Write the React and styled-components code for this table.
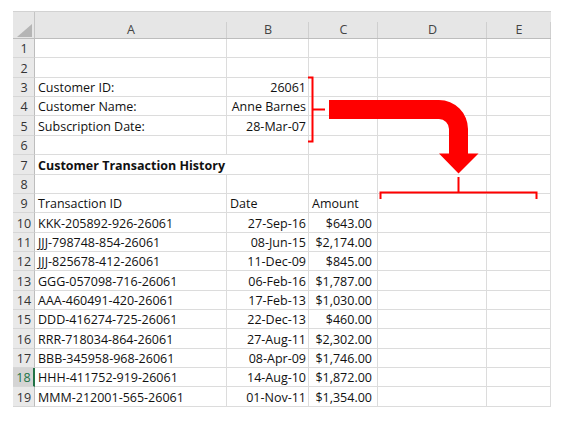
import React from "react";
import styled, { createGlobalStyle, css } from "styled-components";

const GlobalStyle = createGlobalStyle`
  body {
    margin: 0;
    background: #fff;
    font-family: "Open Sans", "Liberation Sans", sans-serif;
  }
`;

const COLS = ["A", "B", "C", "D", "E"];

const Page = styled.div`
  position: relative;
  width: 566px;
  height: 421px;
  overflow: hidden;
`;

const Sheet = styled.div`
  display: grid;
  grid-template-columns: 22px 192px 82px 69px 109px 64px;
  grid-template-rows: 27px;
  grid-auto-rows: 19.37px;
  width: 538px;
  margin: 11px 0 0 13px;
  border-top: 1px solid #d2d2d2;
  font-size: 12.5px;
  color: #111;
`;

const Corner = styled.div`
  position: relative;
  background: #e6e6e6;
  border-right: 1px solid #c4c4c4;
  border-bottom: 1px solid #bdbdbd;
  &::after {
    content: "";
    position: absolute;
    right: 2px;
    bottom: 1px;
    border-left: 15px solid transparent;
    border-bottom: 13px solid #b5b5b5;
  }
`;

const ColHead = styled.div`
  position: relative;
  display: flex;
  align-items: flex-end;
  justify-content: center;
  padding-bottom: 1px;
  background: #e6e6e6;
  border-bottom: 1px solid #bdbdbd;
  color: #444;
  line-height: 15px;
  &::after {
    content: "";
    position: absolute;
    right: 0;
    top: 10px;
    bottom: 0;
    width: 1px;
    background: #cfcfcf;
  }
`;

const RowHead = styled.div`
  display: flex;
  align-items: flex-end;
  justify-content: center;
  padding: 0 0 1px 1px;
  background: #e9e9e9;
  border-right: 1px solid #bdbdbd;
  border-bottom: 1px solid #d6d6d6;
  color: #333;
  line-height: 15px;
  ${(p) =>
    p.$active &&
    css`
      background: #d4d4d4;
      color: #217346;
      border-right: 2px solid #217346;
    `}
`;

const Cell = styled.div`
  display: flex;
  align-items: flex-end;
  justify-content: ${(p) => (p.$right ? "flex-end" : "flex-start")};
  grid-column: span ${(p) => p.$span || 1};
  padding: 0 ${(p) => p.$pr ?? 3}px 1px 3px;
  border-right: 1px solid #dcdcdc;
  border-bottom: 1px solid #dcdcdc;
  white-space: nowrap;
  line-height: 15px;
  font-weight: ${(p) => (p.$bold ? 700 : 400)};
  overflow: visible;
`;

const Overlay = styled.svg`
  position: absolute;
  top: 0;
  left: 0;
  pointer-events: none;
`;

const transactions = [
  ["KKK-205892-926-26061", "27-Sep-16", "$643.00"],
  ["JJJ-798748-854-26061", "08-Jun-15", "$2,174.00"],
  ["JJJ-825678-412-26061", "11-Dec-09", "$845.00"],
  ["GGG-057098-716-26061", "06-Feb-16", "$1,787.00"],
  ["AAA-460491-420-26061", "17-Feb-13", "$1,030.00"],
  ["DDD-416274-725-26061", "22-Dec-13", "$460.00"],
  ["RRR-718034-864-26061", "27-Aug-11", "$2,302.00"],
  ["BBB-345958-968-26061", "08-Apr-09", "$1,746.00"],
  ["HHH-411752-919-26061", "14-Aug-10", "$1,872.00"],
  ["MMM-212001-565-26061", "01-Nov-11", "$1,354.00"],
];

// each row: list of cells {text, right, bold, span, pr}
const rows = [
  [],
  [],
  [{ text: "Customer ID:" }, { text: "26061", right: true, pr: 2 }],
  [{ text: "Customer Name:" }, { text: "Anne Barnes", right: true, pr: 2 }],
  [{ text: "Subscription Date:" }, { text: "28-Mar-07", right: true, pr: 2 }],
  [],
  [{ text: "Customer Transaction History", bold: true, span: 2 }],
  [],
  [{ text: "Transaction ID" }, { text: "Date" }, { text: "Amount" }],
  ...transactions.map(([id, date, amt]) => [
    { text: id },
    { text: date, right: true, pr: 2 },
    { text: amt, right: true, pr: 5 },
  ]),
];

const Row = ({ n, cells }) => {
  const used = cells.reduce((s, c) => s + (c.span || 1), 0);
  const blanks = Array.from({ length: COLS.length - used });
  return (
    <>
      <RowHead $active={n === 18}>{n}</RowHead>
      {cells.map((c, i) => (
        <Cell key={i} $right={c.right} $bold={c.bold} $span={c.span} $pr={c.pr}>
          {c.text}
        </Cell>
      ))}
      {blanks.map((_, i) => (
        <Cell key={"b" + i} />
      ))}
    </>
  );
};

const Annotations = () => (
  <Overlay width="566" height="421" viewBox="0 0 566 421">
    <path
      d="M308 77.5 H312.5 V141.5 H308 M312.5 109.5 H325"
      fill="none"
      stroke="#ff0000"
      strokeWidth="2"
    />
    <path
      d="M329 100 H439 A29 29 0 0 1 468 129 V153.5 H478.5 L458.5 173.5 L439 153.5 H449 V129 A10 10 0 0 0 439 119 H329 Z"
      fill="#ff0000"
    />
    <path
      d="M380.5 199 V192.5 H536.5 V199 M458.5 192.5 V177"
      fill="none"
      stroke="#ff0000"
      strokeWidth="2"
    />
  </Overlay>
);

export default function App() {
  return (
    <Page>
      <GlobalStyle />
      <Sheet>
        <Corner />
        {COLS.map((c) => (
          <ColHead key={c}>{c}</ColHead>
        ))}
        {rows.map((cells, i) => (
          <Row key={i} n={i + 1} cells={cells} />
        ))}
      </Sheet>
      <Annotations />
    </Page>
  );
}
